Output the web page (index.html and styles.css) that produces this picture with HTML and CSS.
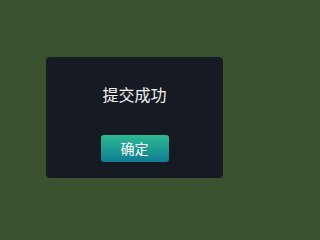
FILE: index.html
```html
<!DOCTYPE html>
<html lang="zh">
<head>
<meta charset="utf-8">
<link rel="stylesheet" href="styles.css">
</head>
<body>
<div class="stage">
  <div class="dialog">
    <div class="title">提交成功</div>
    <button class="ok">确定</button>
  </div>
</div>
</body>
</html>
```
FILE: styles.css
```css
html, body {
  margin: 0;
  padding: 0;
  background: #3a5230;
}
.stage {
  width: 268px;
  height: 237px;
  box-sizing: border-box;
  padding: 57px 0 0 46px;
}
.dialog {
  width: 177px;
  height: 121px;
  box-sizing: border-box;
  background: #161a22;
  border-radius: 4px;
  padding-top: 26px;
  display: flex;
  flex-direction: column;
  align-items: center;
  font-family: "Noto Sans CJK SC", "Noto Sans", sans-serif;
}
.title {
  color: #f2f2f2;
  font-size: 16px;
  line-height: 22px;
  height: 22px;
  margin-bottom: 30px;
}
.ok {
  width: 68px;
  height: 27px;
  border: none;
  border-radius: 3px;
  background: linear-gradient(to bottom, #2dba8f, #0e7c95);
  color: #ffffff;
  font-family: "Noto Sans CJK SC", "Noto Sans", sans-serif;
  font-size: 14px;
  line-height: 27px;
  padding: 0;
}
```
